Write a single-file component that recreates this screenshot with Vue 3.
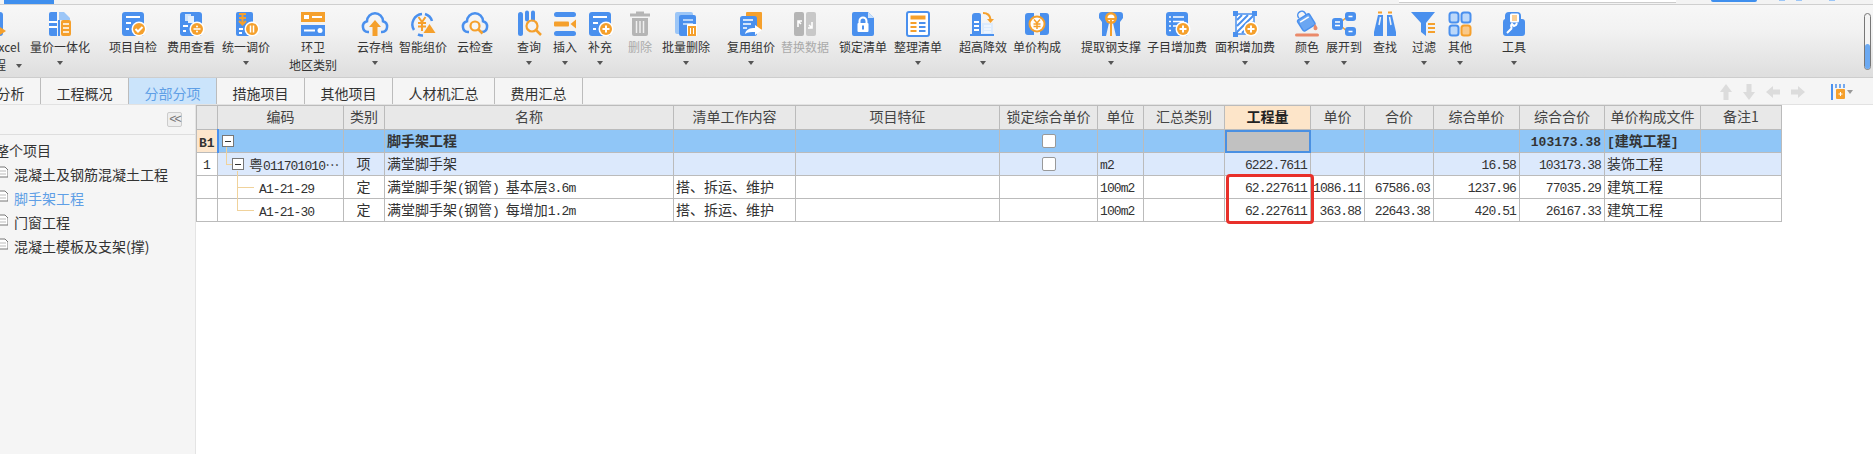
<template>
  <div class="page">
    <div class="topbar">
      <div class="top-tab"></div>
      <div class="top-search"></div>
      <div class="top-btn"></div>
      <i class="top-dot dot-a"></i>
      <i class="top-dot dot-b"></i>
      <i class="top-dot dot-c"></i>
    </div>

    <div class="toolbar">
      <div
        v-for="t in tools"
        :key="t.label"
        class="tool"
        :class="{ off: t.off }"
        :style="{ marginLeft: t.offset + 'px' }"
      >
        <svg class="tool-icon" viewBox="0 0 28 26" v-html="icons[t.icon]"></svg>
        <span class="tool-label">{{ t.label }}</span>
        <span v-if="t.second" class="tool-label">{{ t.second }}<i v-if="t.inlineCaret" class="caret inline"></i></span>
        <i v-if="t.caret" class="caret"></i>
      </div>
      <div class="scroll-pill"><i></i></div>
    </div>

    <div class="tabs">
      <div class="tab first">分析</div>
      <div v-for="tab in tabs" :key="tab" class="tab" :class="{ active: tab === '分部分项' }">{{ tab }}</div>
      <div class="tab-tools">
        <svg width="14" height="18" viewBox="0 0 14 18"><path d="M7 1l6 8H9.500v8h-5V9H1z" /></svg>
        <svg width="14" height="18" viewBox="0 0 14 18"><path d="M7 17l6-8H9.500V1h-5v8H1z" /></svg>
        <svg width="16" height="14" viewBox="0 0 16 14"><path d="M1 7l7-6v3.500h7v5H8V13z" /></svg>
        <svg width="16" height="14" viewBox="0 0 16 14"><path d="M15 7L8 1v3.500H1v5h7V13z" /></svg>
        <svg class="cols-icon" width="16" height="16" viewBox="0 0 16 16">
          <rect x="0" y="0" width="2" height="16" fill="#4a90ee" />
          <path d="M5 0v4M9 0v4M13 0v4" stroke="#4a90ee" stroke-width="1.500" />
          <rect x="5" y="5" width="9" height="10" rx="1" fill="#f5a02c" />
          <path d="M9.500 8v4M7.500 10h4" stroke="#fff" stroke-width="1" />
        </svg>
        <i class="caret gray"></i>
      </div>
    </div>

    <div class="main">
      <aside class="side">
        <div class="side-head"><span class="collapse">&lt;&lt;</span></div>
        <div class="tree-root">整个项目</div>
        <div v-for="node in nodes" :key="node" class="tree-node" :class="{ current: node === '脚手架工程' }">
          <svg width="9" height="12" viewBox="0 0 9 12">
            <path d="M0 1h6l3 3v7H0" fill="#fff" stroke="#777" />
            <path d="M1 5h6M1 8h6" stroke="#bbb" />
          </svg>
          <span>{{ node }}</span>
        </div>
      </aside>

      <div class="sheet">
        <table class="grid">
          <colgroup>
            <col v-for="c in columns" :key="c.key" :style="{ width: c.width + 'px' }" />
          </colgroup>
          <thead>
            <tr>
              <th v-for="c in columns" :key="c.key" :class="{ hot: c.key === 'qty' }">{{ c.title }}</th>
            </tr>
          </thead>
          <tbody>
            <tr v-for="row in rows" :key="row.id" :class="row.type">
              <td
                v-for="c in columns"
                :key="c.key"
                :class="[c.align, c.key]"
              >
                <template v-if="c.key === 'code'">
                  <i v-if="row.line" class="branch" :class="row.line"></i>
                  <span class="code-cell">
                    <i v-if="row.fold" class="fold"></i>
                    <span><span v-for="(r, i) in runs(row.code)" :key="i" :class="{ latin: r.latin }">{{ r.text }}</span></span>
                  </span>
                </template>
                <i v-else-if="c.key === 'lock' && row.check" class="check"></i>
                <template v-else>
                  <span v-for="(r, i) in runs(row[c.key])" :key="i" :class="{ latin: r.latin }">{{ r.text }}</span>
                </template>
              </td>
            </tr>
          </tbody>
        </table>
        <div class="red-box"></div>
      </div>
    </div>
  </div>
</template>

<script setup>
const B = '#4a90ee'
const L = '#9cc6f7'
const O = '#f5a02c'
const G = '#b5b5b5'

const doc = `<rect x="3" y="1" width="22" height="24" rx="3" fill="${B}"/>`
const docLines = `<path d="M7 6h14M7 12h5M7 18h3" stroke="#fff" stroke-width="2"/>`
const badge = (inner) => `<circle cx="20" cy="18" r="7.500" fill="#fff"/><circle cx="20" cy="18" r="6" fill="${O}"/>${inner}`
const plus = '<path d="M20 14.500v7M16.500 18h7" stroke="#fff" stroke-width="2"/>'
const check = '<path d="M16.500 18l2.500 2.500 4.500-4.500" fill="none" stroke="#fff" stroke-width="2"/>'
const cloud = `<path d="M8 21h-1a5.500 5.500 0 0 1-1-10.800 8 8 0 0 1 16 0 5.500 5.500 0 0 1-1 10.800h-1" fill="none" stroke="${B}" stroke-width="2.500"/>`

const icons = {
  export: `<rect x="2" y="1" width="21" height="24" rx="3" fill="${B}"/><path d="M17 14l9 6-9 6z" fill="${O}"/>`,
  price: `<path d="M3 3a2 2 0 0 1 2-2h6v24H5a2 2 0 0 1-2-2z" fill="${B}"/><path d="M13 1h5l6 6v2H13z" fill="${L}"/><path d="M13 9v16" stroke="${B}" stroke-width="2"/><path d="M3 11h8M3 16h8" stroke="#fff" stroke-width="2"/><rect x="15" y="9" width="10" height="16" rx="2" fill="${O}"/><path d="M17 13h6M17 17h6M17 21h6" stroke="#fff" stroke-width="1.500"/>`,
  selfCheck: doc + docLines + badge(check),
  cost: doc + `<rect x="8" y="3" width="6" height="7" fill="#cfe3fb"/><rect x="11" y="5" width="6" height="7" fill="#e3effd"/><path d="M6 15h5M6 20h3" stroke="#fff" stroke-width="2"/>` + badge('<path d="M16.500 18h7" stroke="#fff" stroke-width="1.500"/><circle cx="20" cy="15.500" r="1" fill="#fff"/><circle cx="20" cy="20.500" r="1" fill="#fff"/>'),
  adjust: `<rect x="4" y="1" width="17" height="24" rx="2" fill="${B}"/><path d="M7 3h7M7 7h7M10.500 3v10M7 10l3.500 3.500L14 10" fill="none" stroke="${O}" stroke-width="2"/><path d="M7 18h4M7 22h3" stroke="#fff" stroke-width="2"/>` + badge('<path d="M18.500 14.500v7M21.500 14.500v7" stroke="#fff" stroke-width="1.500"/>'),
  region: `<rect x="2" y="1" width="24" height="10" fill="${O}"/><rect x="2" y="14" width="24" height="11" fill="${B}"/><rect x="5" y="4" width="5" height="4" fill="#fff"/><path d="M13 6h10M5 19.500h11" stroke="#fff" stroke-width="2"/><circle cx="21" cy="19.500" r="2.500" fill="#fff"/>`,
  cloudUp: cloud + `<path d="M14 9l6 7h-3.500v9h-5v-9H8z" fill="${O}"/>`,
  smart: `<path d="M5 19a10.500 10.500 0 0 1 8-16" fill="none" stroke="${B}" stroke-width="2.500"/><path d="M16 3a10.500 10.500 0 0 1 7 7M9 23.500a10.500 10.500 0 0 0 5 1" fill="none" stroke="${B}" stroke-width="2.500"/><path d="M9.500 6l3.500 5 3.500-5M9 12h8M9 15.500h8M13 11v9" fill="none" stroke="${O}" stroke-width="2"/><path d="M20.500 13l6 9h-12z" fill="${O}"/>`,
  cloudCheck: cloud + `<circle cx="14" cy="15" r="4.500" fill="#f6f6f6" stroke="${O}" stroke-width="2.200"/><path d="M17.500 18.500l4 4" stroke="${O}" stroke-width="2.500"/>`,
  query: `<rect x="3" y="1" width="5" height="24" rx="2.500" fill="${B}"/><path d="M12 1.500v7M18 1.500v7" stroke="${B}" stroke-width="4" stroke-linecap="round"/><circle cx="17" cy="15" r="5.500" fill="none" stroke="${O}" stroke-width="2.200"/><path d="M21 19l5 5" stroke="${O}" stroke-width="2.500"/>`,
  insert: `<rect x="3" y="1" width="22" height="5" rx="2.500" fill="${B}"/><rect x="3" y="20" width="22" height="5" rx="2.500" fill="${B}"/><rect x="3" y="10.500" width="15" height="5" rx="1" fill="${O}"/><path d="M25 8.500v9l-5.500-4.500z" fill="${O}"/>`,
  addRow: doc + docLines + badge(plus),
  trash: `<rect x="10" y="0.500" width="8" height="3" fill="${G}"/><rect x="4" y="2.500" width="20" height="3" fill="${G}"/><path d="M6 7h16v16a2 2 0 0 1-2 2H8a2 2 0 0 1-2-2z" fill="${G}"/><path d="M10.500 10v12M14 10v12M17.500 10v12" stroke="#f0f0f0" stroke-width="1.500"/>`,
  batchDel: `<rect x="3" y="1" width="18" height="22" rx="2" fill="${L}"/><path d="M7 6a2 2 0 0 1 2-2h13a2 2 0 0 1 2 2v19H9a2 2 0 0 1-2-2z" fill="${B}"/><path d="M11 9h10M11 13h10" stroke="#d7e7fb" stroke-width="1.500"/><rect x="15" y="13" width="10" height="12" rx="1" fill="#fff"/><rect x="16" y="15" width="8" height="10" fill="${O}"/><path d="M18.500 17v6M21.500 17v6" stroke="#fff"/>`,
  reuse: `<rect x="9" y="1" width="16" height="18" rx="1" fill="${O}"/><rect x="3" y="5" width="17" height="20" rx="2.500" fill="${B}"/><path d="M6 9h10M6 13h8M6 17h4" stroke="#fff" stroke-width="1.600"/><path d="M8 23c1-5 5-6 10-6v-3l7 5-7 5v-3c-4 0-7 0-10 2z" fill="#fff"/>`,
  replace: `<rect x="3" y="1" width="10" height="24" rx="2" fill="${G}"/><rect x="15" y="1" width="10" height="24" rx="2" fill="#c8c8c8"/><path d="M7 17v-6h4M7 11l3 3" fill="none" stroke="#fff" stroke-width="1.600" transform="translate(0 -1)"/><path d="M21 10v6h-4M21 16l-3-3" fill="none" stroke="#fff" stroke-width="1.600" transform="translate(0 1)"/>`,
  lock: `<path d="M5 1h14l6 6v16a2 2 0 0 1-2 2H5a2 2 0 0 1-2-2V3a2 2 0 0 1 2-2z" fill="${B}"/><path d="M19 1l6 6h-6z" fill="#cfe3fb"/><path d="M10.500 12V10a3.500 3.500 0 0 1 7 0v2" fill="none" stroke="#fff" stroke-width="2"/><rect x="8.500" y="12" width="11" height="9" rx="1" fill="#fff"/><rect x="13" y="14.500" width="2" height="4" fill="${B}"/>`,
  organize: `<rect x="3" y="1" width="22" height="24" rx="2" fill="#fff" stroke="${B}" stroke-width="2"/><rect x="6.500" y="4.500" width="15" height="4" fill="${O}"/><path d="M6.500 12h6M6.500 16h6M6.500 20h6" stroke="${O}" stroke-width="2"/><path d="M15 12h6.500M15 16h6.500M15 20h6.500" stroke="${B}" stroke-width="2"/>`,
  superHigh: `<path d="M3 5a3 3 0 0 1 3-3h4a2 2 0 0 1 2 2v19H3z" fill="${B}"/><rect x="1" y="23" width="24" height="2" fill="${B}"/><path d="M5 11h5M5 15h5M5 19h5" stroke="#fff" stroke-width="2"/><rect x="13" y="12" width="11" height="11" fill="#dcebfd"/><path d="M15 15h7M15 18h7M15 21h7" stroke="#fff"/><path d="M14 2c5 0 7 2 7.500 6.500" fill="none" stroke="${O}" stroke-width="2.200"/><path d="M18 8l3.500 4 3.500-4z" fill="${O}"/>`,
  composition: `<path d="M5 2h6v22H5a3 3 0 0 1-3-3V5a3 3 0 0 1 3-3zM17 2h6a3 3 0 0 1 3 3v16a3 3 0 0 1-3 3h-6z" fill="${B}"/><path d="M8 6h12v14H8z" fill="${B}"/><circle cx="14" cy="13" r="8.500" fill="${O}"/><circle cx="14" cy="13" r="6.500" fill="#fff"/><path d="M11 8.500l3 3.500 3-3.500M10.500 13h7M10.500 15.500h7M14 12v6" fill="none" stroke="${O}" stroke-width="1.500"/>`,
  steel: `<path d="M5 1h18a3 3 0 0 1 3 3v3l-3 4v14h-4L16 12h-4L9 25H5V11L2 7V4a3 3 0 0 1 3-3z" fill="${B}"/><circle cx="14" cy="7" r="6" fill="${O}"/><circle cx="14" cy="7" r="3.500" fill="#fff"/><path d="M14 7v18" stroke="${O}" stroke-width="2"/><path d="M10 8h8" stroke="${O}" stroke-width="2"/>`,
  childFee: doc + `<path d="M10 6h11M10 10.500h11M10 15h5" stroke="#fff" stroke-width="1.500"/><path d="M6 6h2M6 10.500h2M6 15h2M6 19.500h2" stroke="#fff" stroke-width="1.500"/>` + badge(plus),
  areaFee: `<path d="M5 3h18v20H5z" fill="#fff" stroke="${B}" stroke-width="1.500"/><path d="M6 9l5-5M6 15l11-11M6 21L22 5M11 22l11-11M17 22l5-5" stroke="${B}" stroke-width="2"/><path d="M2 0h5v5H2zM21 0h5v5h-5zM2 21h5v5H2z" fill="${B}"/>` + badge(plus),
  color: `<g transform="rotate(-32 13 11)"><path d="M9 4V3a4 4 0 0 1 8 0v3" fill="none" stroke="${B}" stroke-width="1.500"/><rect x="6" y="5" width="14" height="13" rx="2" fill="#6aa6f2" stroke="${B}" stroke-width="1.500"/><path d="M8 8h10" stroke="#fff" stroke-width="1.500"/></g><path d="M22 13c1.500 2 2.500 3 2.500 4.200a2 2 0 0 1-4 0c0-1 .5-2.200 1.500-4.200z" fill="#ea8a6a"/><rect x="2" y="22.500" width="24" height="3" rx="1.500" fill="#ea8a6a"/>`,
  expand: `<path d="M11 11l7-6M11 15l7 6" stroke="${O}" stroke-width="1.500"/><rect x="2" y="7" width="11" height="12" rx="3" fill="${B}"/><rect x="15" y="1" width="11" height="9" rx="3" fill="${B}"/><rect x="15" y="16" width="11" height="9" rx="3" fill="${B}"/><path d="M5 11h5M5 14.500h5M18.500 5.500h4M18.500 20.500h4" stroke="#fff" stroke-width="1.500"/>`,
  find: `<path d="M7 4h5v21H3v-4z" fill="${B}"/><path d="M21 4h-5v21h9v-4z" fill="${B}"/><path d="M7 1.500h4M17 1.500h4" stroke="${O}" stroke-width="2"/><path d="M9.500 6L8 14M18.500 6l1.500 8" stroke="#f2f2f2" stroke-width="1.500"/>`,
  filter: `<path d="M1 1h24l-9 11v13l-5-4v-9z" fill="${B}"/><path d="M18 13h7M18 17h7M18 21h7" stroke="${O}" stroke-width="2"/>`,
  other: `<rect x="3.500" y="1.500" width="9" height="10" rx="2.500" fill="#bcd8fa" stroke="${B}" stroke-width="2"/><rect x="15.500" y="1.500" width="9" height="10" rx="2.500" fill="#bcd8fa" stroke="${B}" stroke-width="2"/><rect x="3.500" y="14.500" width="9" height="10" rx="2.500" fill="#bcd8fa" stroke="${B}" stroke-width="2"/><rect x="15.500" y="14.500" width="9" height="10" rx="2.500" fill="#f9c98a" stroke="${O}" stroke-width="2"/>`,
  tools: `<path d="M9 1h8a4 4 0 0 1 4 4v3h1a3 3 0 0 1 3 3v11a3 3 0 0 1-3 3H6a3 3 0 0 1-3-3V11a3 3 0 0 1 2-3V5a4 4 0 0 1 4-4z" fill="${B}"/><rect x="10" y="2.500" width="9" height="9" rx="1.500" fill="#fff"/><path d="M12 5h5M12 7h5M12 9h5" stroke="${O}" stroke-width="1.200"/><path d="M7 22l5-5M12 17a3 3 0 0 1 0-4l2 2 2-1 1-2" fill="none" stroke="#fff" stroke-width="2"/>`
}

// centre x of each toolbar item, the items themselves are 40px wide
const rawTools = [
  { label: '导出Excel', second: '工程', icon: 'export', c: -6, inlineCaret: true },
  { label: '量价一体化', icon: 'price', c: 60, caret: true },
  { label: '项目自检', icon: 'selfCheck', c: 133 },
  { label: '费用查看', icon: 'cost', c: 191 },
  { label: '统一调价', icon: 'adjust', c: 246, caret: true },
  { label: '环卫', second: '地区类别', icon: 'region', c: 313 },
  { label: '云存档', icon: 'cloudUp', c: 375, caret: true },
  { label: '智能组价', icon: 'smart', c: 423 },
  { label: '云检查', icon: 'cloudCheck', c: 475 },
  { label: '查询', icon: 'query', c: 529, caret: true },
  { label: '插入', icon: 'insert', c: 565, caret: true },
  { label: '补充', icon: 'addRow', c: 600, caret: true },
  { label: '删除', icon: 'trash', c: 640, off: true },
  { label: '批量删除', icon: 'batchDel', c: 686, caret: true },
  { label: '复用组价', icon: 'reuse', c: 751, caret: true },
  { label: '替换数据', icon: 'replace', c: 805, off: true },
  { label: '锁定清单', icon: 'lock', c: 863 },
  { label: '整理清单', icon: 'organize', c: 918, caret: true },
  { label: '超高降效', icon: 'superHigh', c: 983, caret: true },
  { label: '单价构成', icon: 'composition', c: 1037 },
  { label: '提取钢支撑', icon: 'steel', c: 1111, caret: true },
  { label: '子目增加费', icon: 'childFee', c: 1177 },
  { label: '面积增加费', icon: 'areaFee', c: 1245, caret: true },
  { label: '颜色', icon: 'color', c: 1307, caret: true },
  { label: '展开到', icon: 'expand', c: 1344, caret: true },
  { label: '查找', icon: 'find', c: 1385 },
  { label: '过滤', icon: 'filter', c: 1424, caret: true },
  { label: '其他', icon: 'other', c: 1460, caret: true },
  { label: '工具', icon: 'tools', c: 1514, caret: true }
]

const tools = rawTools.map((t, i) => ({
  ...t,
  offset: i === 0 ? t.c - 20 : t.c - rawTools[i - 1].c - 40
}))

const tabs = ['工程概况', '分部分项', '措施项目', '其他项目', '人材机汇总', '费用汇总']
const nodes = ['混凝土及钢筋混凝土工程', '脚手架工程', '门窗工程', '混凝土模板及支架(撑)']

const columns = [
  { key: 'seq', title: '', width: 21, align: 'center' },
  { key: 'code', title: '编码', width: 126 },
  { key: 'kind', title: '类别', width: 41, align: 'center' },
  { key: 'name', title: '名称', width: 289 },
  { key: 'work', title: '清单工作内容', width: 122 },
  { key: 'feat', title: '项目特征', width: 204 },
  { key: 'lock', title: '锁定综合单价', width: 98, align: 'center' },
  { key: 'unit', title: '单位', width: 46 },
  { key: 'sum', title: '汇总类别', width: 81 },
  { key: 'qty', title: '工程量', width: 86, align: 'right' },
  { key: 'price', title: '单价', width: 54, align: 'right' },
  { key: 'total', title: '合价', width: 69, align: 'right' },
  { key: 'cu', title: '综合单价', width: 86, align: 'right' },
  { key: 'ct', title: '综合合价', width: 85, align: 'right' },
  { key: 'file', title: '单价构成文件', width: 96 },
  { key: 'note', title: '备注1', width: 81 }
]

const rows = [
  { id: 1, type: 'section', seq: 'B1', code: '', fold: true, name: '脚手架工程', check: true, ct: '103173.38', file: '[建筑工程]' },
  { id: 2, type: 'bill', seq: '1', code: '粤011701010…', fold: true, line: 'to-bill', kind: '项', name: '满堂脚手架', check: true, unit: 'm2', qty: '6222.7611', cu: '16.58', ct: '103173.38', file: '装饰工程' },
  { id: 3, type: 'quota', code: 'A1-21-29', line: 'to-quota', kind: '定', name: '满堂脚手架(钢管) 基本层3.6m', work: '搭、拆运、维护', unit: '100m2', qty: '62.227611', price: '1086.11', total: '67586.03', cu: '1237.96', ct: '77035.29', file: '建筑工程' },
  { id: 4, type: 'quota', code: 'A1-21-30', line: 'to-quota-next', kind: '定', name: '满堂脚手架(钢管) 每增加1.2m', work: '搭、拆运、维护', unit: '100m2', qty: '62.227611', price: '363.88', total: '22643.38', cu: '420.51', ct: '26167.33', file: '建筑工程' }
]

// ascii in the grid is narrower than the cjk text beside it
const runs = (text) => {
  if (!text) return []
  return text
    .split(/([\x20-\x7e]+)/)
    .filter(Boolean)
    .map((part) => ({ text: part, latin: /^[\x20-\x7e]+$/.test(part) }))
}
</script>

<style scoped>
.page {
  width: 1873px;
  height: 454px;
  overflow: hidden;
  display: flex;
  flex-direction: column;
  background: #fff;
  color: #333;
  font-family: "Noto Sans CJK SC", "Liberation Sans", sans-serif;
  font-size: 14px;
}

.topbar {
  height: 4px;
  flex: none;
  position: relative;
  background: #f3f3f3;
  border-bottom: 1px solid #cfcfcf;
}

.top-tab {
  position: absolute;
  left: 4px;
  top: 0;
  width: 50px;
  height: 4px;
  background: #3f8fee;
}

.top-search {
  position: absolute;
  left: 1399px;
  top: 0;
  width: 277px;
  height: 3px;
  background: #fff;
  border-bottom: 1px solid #ccc;
  box-sizing: border-box;
}

.top-btn {
  position: absolute;
  left: 1711px;
  top: 0;
  width: 46px;
  height: 2px;
  background: #3f8fee;
  border-radius: 0 0 6px 6px;
}

.top-dot {
  position: absolute;
  top: 0;
  width: 6px;
  height: 1px;
  background: #9cc6f7;
}

.dot-a { left: 1779px; }
.dot-b { left: 1796px; }
.dot-c { left: 1829px; }

.toolbar {
  height: 72px;
  flex: none;
  box-sizing: content-box;
  display: flex;
  position: relative;
  background: linear-gradient(#f7f7f7, #f2f2f2 35%, #dedede);
  border-bottom: 1px solid #cdcdcd;
}

.tool {
  width: 40px;
  flex: none;
  display: flex;
  flex-direction: column;
  align-items: center;
  padding-top: 6px;
  font-size: 12px;
  color: #333;
}

.tool.off {
  color: #aaa;
}

.tool-icon {
  width: 28px;
  height: 26px;
  flex: none;
  overflow: visible;
}

.tool-label {
  flex: none;
  height: 17px;
  line-height: 17px;
  margin-top: 1px;
  white-space: nowrap;
}

.caret {
  flex: none;
  width: 0;
  height: 0;
  margin-top: 6px;
  border-left: 3px solid transparent;
  border-right: 3px solid transparent;
  border-top: 4px solid #555;
}

.caret.inline {
  display: inline-block;
  margin: 0 -16px 2px 10px;
}

.caret.gray {
  border-top-color: #999;
  margin: 0 0 0 -9px;
}

.scroll-pill {
  position: absolute;
  left: 1864px;
  top: 8px;
  width: 7px;
  height: 57px;
  box-sizing: border-box;
  border: 1px solid #777;
  border-radius: 4px;
  background: #f4f4f4;
  display: flex;
  align-items: flex-end;
}

.scroll-pill i {
  width: 100%;
  height: 25px;
  border-radius: 3px;
  background: #6ba9f2;
}

.tabs {
  height: 26px;
  flex: none;
  display: flex;
  align-items: stretch;
  background: #f5f5f5;
  border-bottom: 1px solid #e2e2e2;
}

.tab {
  width: 88px;
  box-sizing: border-box;
  flex: none;
  display: flex;
  align-items: center;
  justify-content: center;
  padding-top: 3px;
  border-right: 1px solid #bcbcbc;
  color: #333;
  white-space: nowrap;
}

.tab.first {
  width: 60px;
  margin-left: -19px;
}

.tab:nth-child(6) {
  width: 102px;
}

.tab.active {
  background: #cbe4fb;
  color: #5f9fe6;
}

.tab-tools {
  margin-left: auto;
  margin-right: 20px;
  display: flex;
  align-items: center;
  gap: 9px;
  padding-top: 2px;
}

.tab-tools svg {
  fill: #dcdcdc;
}

.cols-icon {
  margin-left: 16px;
}

.main {
  flex: 1;
  display: flex;
  min-height: 0;
}

.side {
  width: 195px;
  flex: none;
  box-sizing: content-box;
  background: #f5f5f5;
  border-right: 1px solid #e4e4e4;
  color: #333;
}

.side-head {
  height: 29px;
  display: flex;
  justify-content: flex-end;
  align-items: center;
  padding-right: 13px;
  border-bottom: 1px solid #dedede;
}

.collapse {
  width: 15px;
  height: 15px;
  box-sizing: border-box;
  display: flex;
  align-items: center;
  justify-content: center;
  border: 1px solid #ccc;
  border-radius: 2px;
  background: #eee;
  color: #777;
  font: 12px "Liberation Mono", monospace;
  letter-spacing: -2px;
}

.tree-root {
  height: 24px;
  line-height: 24px;
  margin: 3px 0 0 -5px;
  white-space: nowrap;
}

.tree-node {
  height: 24px;
  display: flex;
  align-items: center;
  gap: 6px;
  margin-left: -1px;
  white-space: nowrap;
}

.tree-node svg {
  margin-top: -4px;
  flex: none;
}

.tree-node.current {
  color: #5f9fe6;
}

.sheet {
  position: relative;
  flex: none;
  width: 1586px;
  align-self: flex-start;
}

.grid {
  table-layout: fixed;
  border-collapse: collapse;
  width: 1585px;
  font-size: 14px;
}

.grid th,
.grid td {
  border: 1px solid #bbb;
  padding: 0 3px 2px 2px;
  box-sizing: border-box;
  white-space: nowrap;
  overflow: hidden;
}

.grid th {
  height: 24px;
  background: #e8e8e8;
  font-weight: 400;
  color: #444;
  text-align: center;
  padding: 0 0 3px;
}

.grid th.hot {
  background: #fde5c9;
  color: #222;
  font-weight: 700;
}

.grid td {
  height: 23px;
  background: #fff;
  color: #333;
}

.grid td.center { text-align: center; }
.grid td.right { text-align: right; }
.grid td.lock { padding: 0; }

.latin {
  font-family: "Liberation Mono", monospace;
  font-size: 13px;
  letter-spacing: -0.9px;
}

.section .latin {
  letter-spacing: 0;
}

.section td {
  background: #90c6f7;
  font-weight: 700;
}

.section td.seq {
  background: #fde6cc;
  border-right: 2px solid #4a90ee;
  padding: 0;
}

.section td.qty {
  background: #c1c1c1;
  outline: 2px solid #4a90e2;
  outline-offset: -2px;
}

.bill td {
  background: #dce9fc;
}

.bill td.seq {
  background: #fff;
}

.grid td.code {
  position: relative;
  overflow: visible;
  padding: 0;
}

.code-cell {
  display: flex;
  align-items: center;
  gap: 5px;
  position: relative;
}

.section .code-cell { padding-left: 3px; }
.bill .code-cell { padding-left: 14px; }
.quota .code-cell { padding-left: 41px; }

.fold {
  width: 12px;
  height: 12px;
  box-sizing: border-box;
  flex: none;
  display: flex;
  align-items: center;
  justify-content: center;
  background: #fff;
  border: 1px solid #777;
}

.fold::after {
  content: "";
  width: 6px;
  height: 1px;
  background: #333;
}

.branch {
  position: absolute;
  box-sizing: border-box;
  border-left: 1px solid #f0d29b;
  border-bottom: 1px solid #f0d29b;
}

.branch.to-bill {
  left: 8px;
  top: -6px;
  width: 6px;
  height: 18px;
}

.branch.to-quota {
  left: 19px;
  top: -5px;
  width: 17px;
  height: 17px;
}

.branch.to-quota-next {
  left: 19px;
  top: -12px;
  width: 17px;
  height: 24px;
}

.check {
  display: block;
  width: 14px;
  height: 14px;
  margin: 0 auto;
  box-sizing: border-box;
  background: #fff;
  border: 1px solid #999;
  border-radius: 2px;
}

.red-box {
  position: absolute;
  left: 1030px;
  top: 69px;
  width: 88px;
  height: 50px;
  box-sizing: border-box;
  border: 3px solid #e8302a;
  border-radius: 4px;
}
</style>

<style>
html,
body {
  margin: 0;
  background: #fff;
}
</style>
